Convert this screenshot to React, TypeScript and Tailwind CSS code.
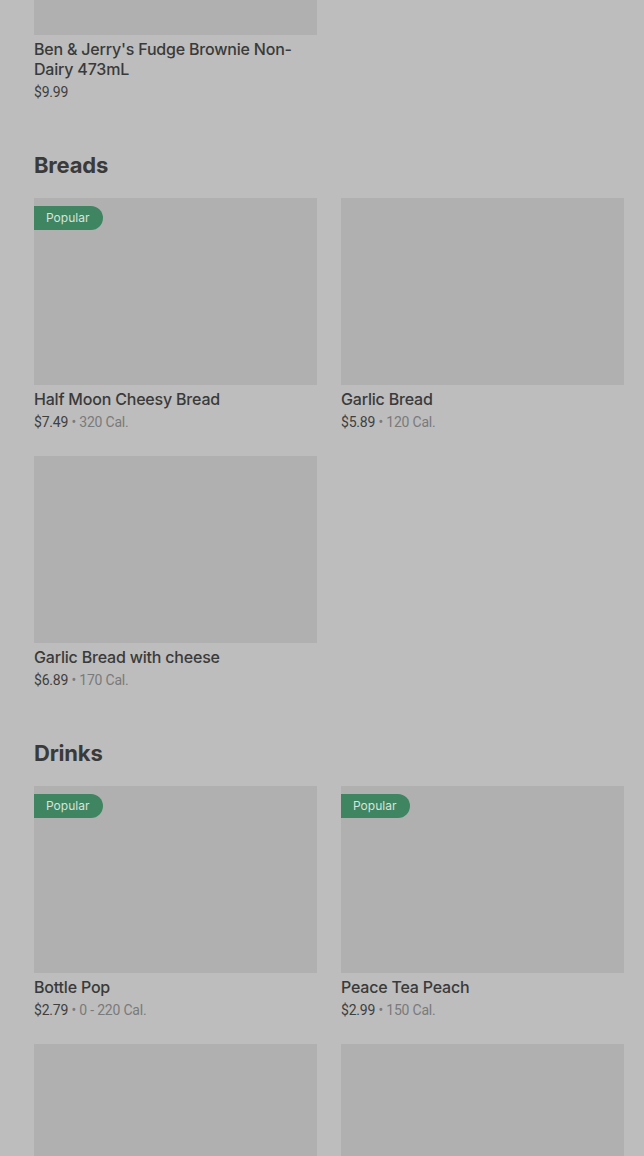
type Item = { name?: string; price?: string; cal?: string; popular?: boolean; imageH?: string };

const sections: { title?: string; items: Item[] }[] = [
  {
    items: [{ name: "Ben & Jerry's Fudge Brownie Non-Dairy 473mL", price: '$9.99', imageH: 'h-[35px]' }],
  },
  {
    title: 'Breads',
    items: [
      { name: 'Half Moon Cheesy Bread', price: '$7.49', cal: '320 Cal.', popular: true },
      { name: 'Garlic Bread', price: '$5.89', cal: '120 Cal.' },
      { name: 'Garlic Bread with cheese', price: '$6.89', cal: '170 Cal.' },
    ],
  },
  {
    title: 'Drinks',
    items: [
      { name: 'Bottle Pop', price: '$2.79', cal: '0 - 220 Cal.', popular: true },
      { name: 'Peace Tea Peach', price: '$2.99', cal: '150 Cal.', popular: true },
      // next row scrolls past the bottom of the window
      { imageH: 'h-[112px]' },
      { imageH: 'h-[112px]' },
    ],
  },
];

function Card({ item }: { item: Item }) {
  return (
    <div className="flex flex-col">
      <div className={`relative bg-[#b0b0b0] ${item.imageH ?? 'h-[187px]'}`}>
        {item.popular && (
          <span className="absolute left-0 top-2 h-6 pl-3 pr-[14px] rounded-r-full bg-[#3f8561] text-[12px] leading-6 text-[#d6e4dc] font-['Inter',sans-serif]">
            Popular
          </span>
        )}
      </div>
      {item.name && (
        <>
          <div className="mt-1 text-[16px] leading-5 font-medium text-[#3a3a3a] font-['Inter',sans-serif] tracking-[-0.2px]">
            {item.name}
          </div>
          <div className="mt-[3px] text-[14px] leading-5 text-[#3f3f3f] tracking-[-0.2px]">
            {item.price}
            {item.cal && (
              <span className="text-[#7a7a7a]">
                {' • '}
                {item.cal}
              </span>
            )}
          </div>
        </>
      )}
    </div>
  );
}

export default function App() {
  return (
    <div className="h-[1156px] bg-[#bdbdbd] pl-[34px] pr-5 font-['Roboto',sans-serif] overflow-hidden">
      <div className="flex flex-col gap-[49px]">
        {sections.map((section, i) => (
          <section key={i}>
            {section.title && (
              <h2 className="mb-[19px] h-7 text-[22px] leading-7 font-bold text-[#3a3a3a] font-['Inter',sans-serif] tracking-[-0.2px]">
                {section.title}
              </h2>
            )}
            <div className="grid grid-cols-2 gap-x-6 gap-y-6">
              {section.items.map((item, j) => (
                <Card key={j} item={item} />
              ))}
            </div>
          </section>
        ))}
      </div>
    </div>
  );
}
